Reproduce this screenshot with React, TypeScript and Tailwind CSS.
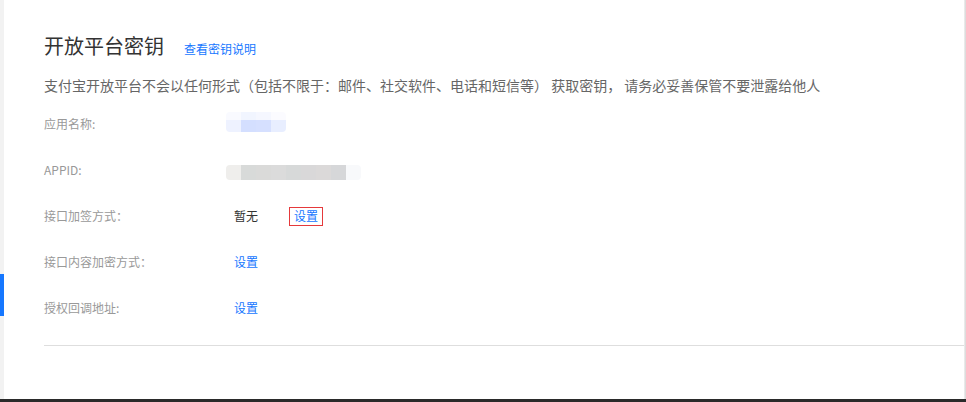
export default function App() {
  const font = { fontFamily: '"Noto Sans CJK SC", "Noto Sans", sans-serif' };
  const rows = [
    { label: "应用名称:", kind: "name" },
    { label: "APPID:", kind: "appid" },
    { label: "接口加签方式：", kind: "sign" },
    { label: "接口内容加密方式：", kind: "link" },
    { label: "授权回调地址:", kind: "link" },
  ];
  return (
    <div className="flex h-[402px] w-[966px] flex-col bg-white" style={font}>
      <div className="flex flex-1 flex-row">
        <div className="flex w-[4px] flex-col bg-[#f2f2f2]">
          <div className="mt-[274px] h-[42px] w-[4px] bg-[#1677ff]" />
        </div>
        <div className="flex flex-1 flex-col pl-[40px]">
          <div className="mt-[32px] flex h-[28px] items-baseline gap-[20px]">
            <span className="text-[20px] leading-[28px] text-[#333]">开放平台密钥</span>
            <span className="text-[12px] leading-[16px] text-[#1677ff]">查看密钥说明</span>
          </div>
          <div className="mt-[15px] h-[20px] text-[14px] leading-[20px] text-[#666] whitespace-nowrap">
            支付宝开放平台不会以任何形式（包括不限于：邮件、社交软件、电话和短信等） 获取密钥， 请务必妥善保管不要泄露给他人
          </div>
          <div className="mt-[6px] flex flex-col">
            {rows.map((r) => (
              <div key={r.label} className="flex h-[46px] items-center">
                <div className="w-[182px] text-[12px] leading-[16px] text-[#999]">{r.label}</div>
                {r.kind === "name" && (
                  <div className="-mt-[4px] flex h-[20px] w-[60px] flex-col overflow-hidden rounded-[4px]">
                    <div className="flex h-[8px]">
                      <div className="w-[15px] bg-[#f9faff]" />
                      <div className="w-[15px] bg-[#f1f5ff]" />
                      <div className="w-[15px] bg-[#f5f7ff]" />
                      <div className="w-[15px] bg-[#fbfbff]" />
                    </div>
                    <div className="flex h-[12px]">
                      <div className="w-[15px] bg-[#eef2ff]" />
                      <div className="w-[15px] bg-[#d4dfff]" />
                      <div className="w-[15px] bg-[#d6e0ff]" />
                      <div className="w-[15px] bg-[#e8eeff]" />
                    </div>
                  </div>
                )}
                {r.kind === "appid" && (
                  <div className="mt-[5px] flex h-[15px] w-[135px] overflow-hidden rounded-[4px]">
                    <div className="w-[15px] bg-[#efeeec]" />
                    <div className="w-[15px] bg-[#d8dad9]" />
                    <div className="w-[15px] bg-[#dadad9]" />
                    <div className="w-[15px] bg-[#dbdbdb]" />
                    <div className="w-[15px] bg-[#d7d9d9]" />
                    <div className="w-[15px] bg-[#d9d8d9]" />
                    <div className="w-[15px] bg-[#dbd9d9]" />
                    <div className="w-[15px] bg-[#d6d7d9]" />
                    <div className="w-[15px] bg-[#f8f9fb]" />
                  </div>
                )}
                {r.kind === "sign" && (
                  <div className="flex items-center pl-[8px]">
                    <span className="text-[12px] leading-[16px] text-[#333]">暂无</span>
                    <span className="ml-[31px] flex h-[19px] items-center border border-[#e5393b] px-[4px] text-[12px] leading-[16px] text-[#1677ff]">
                      设置
                    </span>
                  </div>
                )}
                {r.kind === "link" && (
                  <span className="pl-[8px] text-[12px] leading-[16px] text-[#1677ff]">设置</span>
                )}
              </div>
            ))}
          </div>
          <div className="mt-[14px] h-px bg-[#dedede]" />
        </div>
        <div className="w-[2px] bg-gradient-to-r from-[#f0f0f0] to-[#d6d6d6]" />
      </div>
      <div className="h-[3px] bg-[#2a2a2a]" />
    </div>
  );
}
